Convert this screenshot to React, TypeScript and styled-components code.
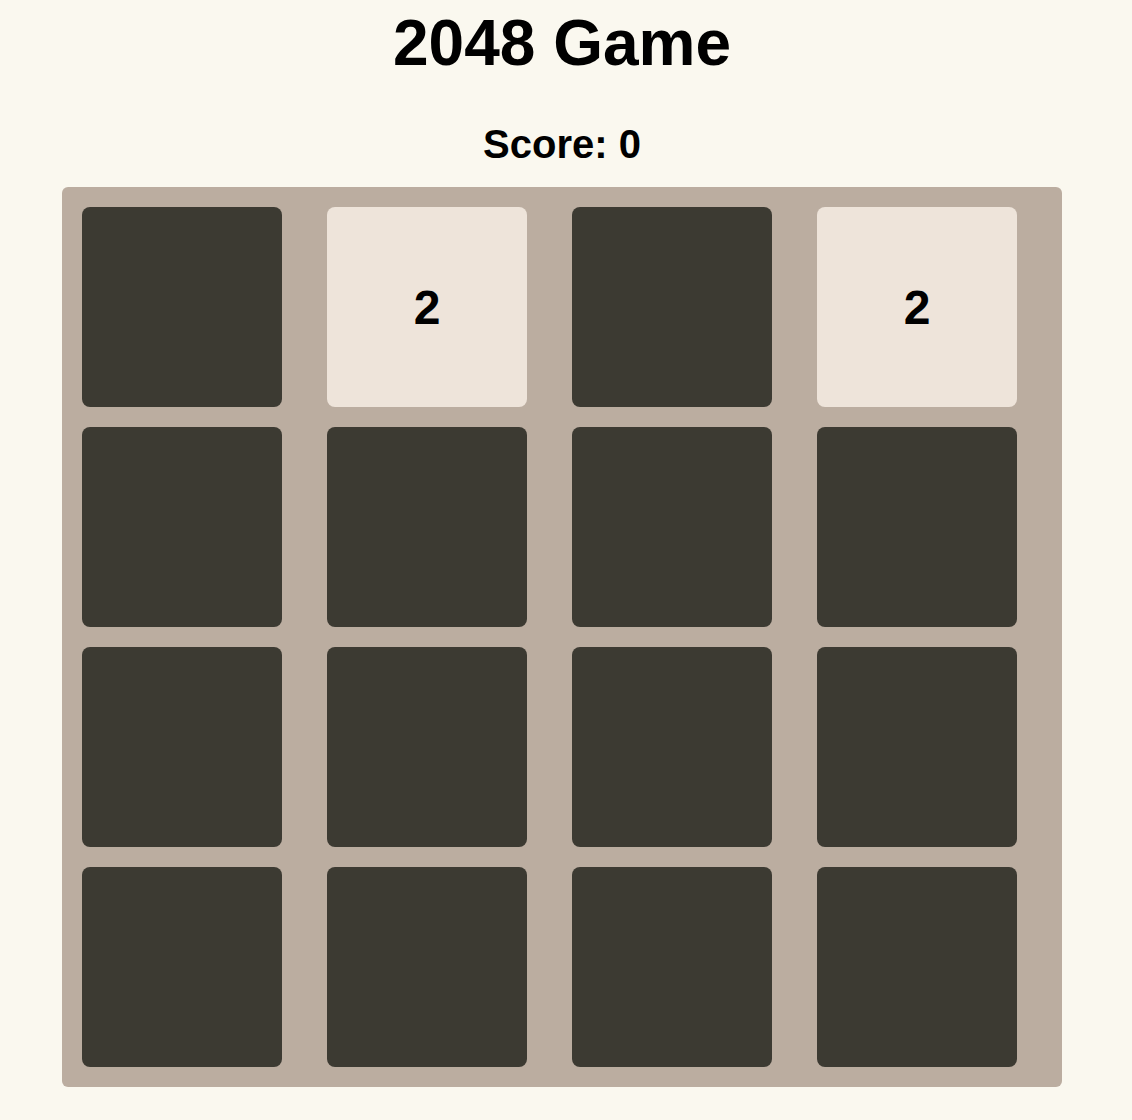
import React from "react";
import styled, { createGlobalStyle } from "styled-components";

const GlobalStyle = createGlobalStyle`
  html, body {
    margin: 0;
    padding: 0;
    background: #faf8ef;
    font-family: "Liberation Sans", Arial, Helvetica, sans-serif;
  }
`;

const Page = styled.div`
  width: 1124px;
  display: flex;
  flex-direction: column;
  align-items: center;
`;

const Title = styled.h1`
  margin: 0;
  height: 86px;
  font-size: 64px;
  line-height: 86px;
  font-weight: 700;
  color: #000;
`;

const Score = styled.div`
  margin-top: 30px;
  height: 57px;
  font-size: 40px;
  line-height: 57px;
  font-weight: 700;
  color: #000;
  box-sizing: border-box;
  padding-bottom: 0;
`;

const Board = styled.div`
  margin-top: 14px;
  width: 1000px;
  height: 900px;
  box-sizing: border-box;
  padding: 20px;
  background: #bbada0;
  border-radius: 6px;
  display: grid;
  grid-template-columns: repeat(4, 200px);
  grid-auto-rows: 200px;
  column-gap: 45px;
  row-gap: 20px;
`;

const Tile = styled.div<{ $value: number }>`
  border-radius: 8px;
  background: ${(p) => (p.$value === 0 ? "#3c3a32" : "#eee4da")};
  display: flex;
  align-items: center;
  justify-content: center;
  font-size: 48px;
  font-weight: 700;
  color: #000;
`;

const grid = [
  [0, 2, 0, 2],
  [0, 0, 0, 0],
  [0, 0, 0, 0],
  [0, 0, 0, 0],
];

export default function App() {
  return (
    <>
      <GlobalStyle />
      <Page>
        <Title>2048 Game</Title>
        <Score>Score: 0</Score>
        <Board>
          {grid.flat().map((v, i) => (
            <Tile key={i} $value={v}>
              {v !== 0 ? v : null}
            </Tile>
          ))}
        </Board>
      </Page>
    </>
  );
}
